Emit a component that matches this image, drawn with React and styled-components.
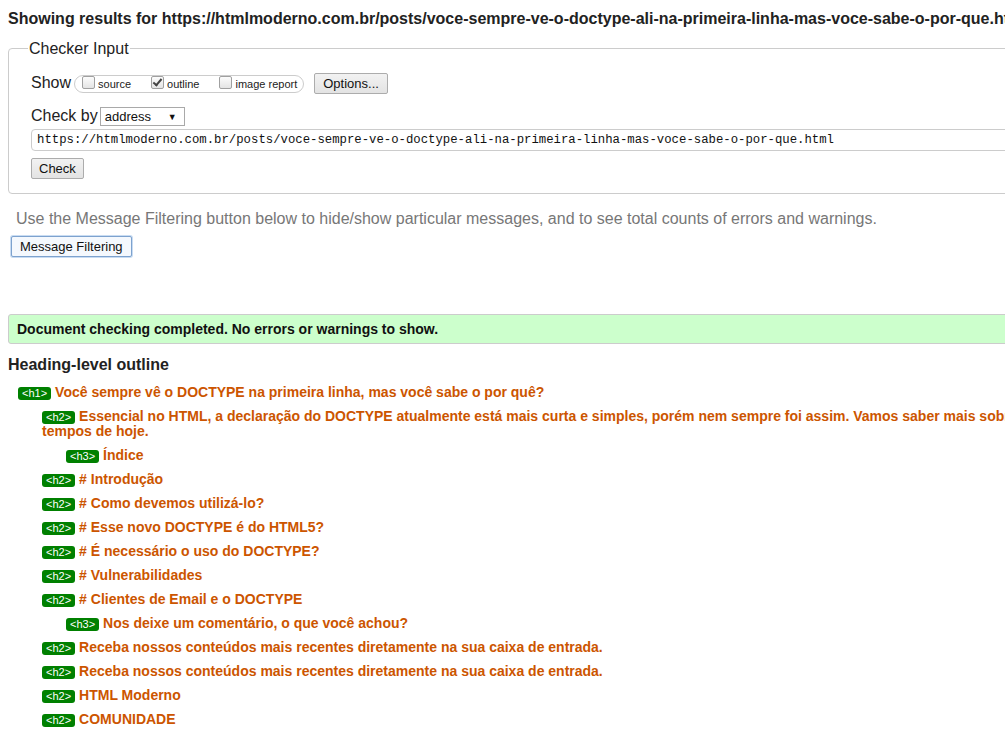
import React from 'react';
import styled, { createGlobalStyle } from 'styled-components';

const GlobalStyle = createGlobalStyle`
  html, body {
    margin: 0;
    padding: 0;
    background: #fff;
    overflow: hidden;
  }
  body {
    font-family: "Liberation Sans", Arial, sans-serif;
    color: #222;
  }
`;

const Page = styled.div`
  width: 1400px;
  padding: 0 8px;
  box-sizing: border-box;
`;

const Title = styled.h2`
  margin: 9px 0 11px;
  font-size: 16px;
  line-height: 20px;
  font-weight: bold;
  white-space: nowrap;
  color: #222;
`;

const Fieldset = styled.fieldset`
  margin: 0;
  padding: 16px 22px 14px;
  border: 1px solid #ccc;
  border-radius: 4px;
`;

const Legend = styled.legend`
  font-size: 16px;
  line-height: 17px;
  padding: 0 1px;
  margin-left: -3px;
  color: #222;
`;

const Row = styled.div`
  display: flex;
  align-items: center;
  gap: ${p => p.$gap || 3}px;
  margin-top: ${p => p.$top || 0}px;
`;

const Label = styled.span`
  font-size: 16px;
  line-height: 18px;
  color: #222;
  margin-top: -2px;
`;

const Pill = styled.div`
  display: flex;
  align-items: center;
  height: 16px;
  padding: 0 6px 0 7px;
  border: 1px solid #ccc;
  border-radius: 9px;
  gap: 20px;
`;

const Option = styled.label`
  display: flex;
  align-items: center;
  gap: 3px;
  font-size: 11px;
  color: #222;
  line-height: 13px;
  padding-top: 1px;
`;

const Box = styled.span`
  position: relative;
  width: 11px;
  height: 11px;
  border: 1px solid #a0a0a0;
  border-radius: 2px;
  background: linear-gradient(#fcfcfc, #e4e4e4);
  margin-top: -4px;
  &::after {
    content: '';
    display: ${p => (p.$checked ? 'block' : 'none')};
    position: absolute;
    left: 3px;
    top: 0px;
    width: 3px;
    height: 7px;
    border: solid #444;
    border-width: 0 2px 2px 0;
    transform: rotate(40deg);
  }
`;

const Button = styled.button`
  font-family: "Liberation Sans", Arial, sans-serif;
  font-size: 13px;
  height: ${p => p.$h || 21}px;
  padding: 0 ${p => p.$px || 7}px;
  color: #111;
  border: 1px solid ${p => (p.$focus ? '#7da2ce' : '#acacac')};
  border-radius: 2px;
  background: ${p => (p.$focus ? '#f4f8fd' : 'linear-gradient(#f2f2f2, #e3e3e3)')};
  box-shadow: ${p => (p.$focus ? '0 0 0 1px #c9dcf2' : 'none')};
  cursor: pointer;
`;

const Select = styled.div`
  display: flex;
  align-items: center;
  justify-content: space-between;
  box-sizing: border-box;
  width: 85px;
  height: 19px;
  padding: 0 7px 0 4px;
  border: 1px solid #a9a9a9;
  font-size: 13px;
  color: #111;
  background: #fff;
  span:last-child {
    font-size: 9px;
  }
`;

const UrlInput = styled.div`
  box-sizing: border-box;
  height: 22px;
  margin-top: 3px;
  padding: 0 5px;
  border: 1px solid #ccc;
  border-radius: 4px;
  font-family: "Liberation Mono", "DejaVu Sans Mono", monospace;
  font-size: 12.3px;
  line-height: 20px;
  color: #111;
  white-space: nowrap;
`;

const Hint = styled.p`
  margin: 15px 0 7px 8px;
  font-size: 16px;
  line-height: 20px;
  color: #777;
`;

const FilterRow = styled.div`
  padding-left: 3px;
  margin-bottom: 57px;
`;

const Success = styled.div`
  padding: 6px 8px;
  border: 1px solid #ccc;
  border-radius: 3px;
  background: #ccffcc;
  font-size: 14px;
  line-height: 16px;
  font-weight: bold;
  color: #111;
`;

const OutlineTitle = styled.h2`
  margin: 11px 0 10px;
  font-size: 16px;
  line-height: 20px;
  font-weight: bold;
  color: #222;
`;

const Outline = styled.ol`
  list-style: none;
  margin: 0;
  padding: 0 0 0 10px;
`;

const Item = styled.li`
  margin: 0 0 9px ${p => (p.$level - 1) * 24}px;
  font-size: 14px;
  line-height: 15px;
  font-weight: bold;
  color: #c50;
`;

const Badge = styled.span`
  display: inline-block;
  padding: 0 4px;
  margin-right: 4px;
  border-radius: 3px;
  background: #008000;
  color: #fff;
  font-size: 11px;
  line-height: 13px;
  font-weight: normal;
`;

const url =
  'https://htmlmoderno.com.br/posts/voce-sempre-ve-o-doctype-ali-na-primeira-linha-mas-voce-sabe-o-por-que.html';

const headings = [
  [1, 'Você sempre vê o DOCTYPE na primeira linha, mas você sabe o por quê?'],
  [2, 'long'],
  [3, 'Índice'],
  [2, '# Introdução'],
  [2, '# Como devemos utilizá-lo?'],
  [2, '# Esse novo DOCTYPE é do HTML5?'],
  [2, '# É necessário o uso do DOCTYPE?'],
  [2, '# Vulnerabilidades'],
  [2, '# Clientes de Email e o DOCTYPE'],
  [3, 'Nos deixe um comentário, o que você achou?'],
  [2, 'Receba nossos conteúdos mais recentes diretamente na sua caixa de entrada.'],
  [2, 'Receba nossos conteúdos mais recentes diretamente na sua caixa de entrada.'],
  [2, 'HTML Moderno'],
  [2, 'COMUNIDADE'],
];

export default function App() {
  return (
    <Page>
      <GlobalStyle />
      <Title>Showing results for {url}</Title>

      <Fieldset>
        <Legend>Checker Input</Legend>
        <Row $gap={3}>
          <Label>Show</Label>
          <Pill>
            <Option><Box />source</Option>
            <Option><Box $checked />outline</Option>
            <Option><Box />image report</Option>
          </Pill>
          <Button $px={8} style={{ marginLeft: 7 }}>Options...</Button>
        </Row>
        <Row $top={13} $gap={2}>
          <Label>Check by</Label>
          <Select>
            <span>address</span>
            <span>▼</span>
          </Select>
        </Row>
        <UrlInput>{url}</UrlInput>
        <Row $top={7}>
          <Button $px={7}>Check</Button>
        </Row>
      </Fieldset>

      <Hint>
        Use the Message Filtering button below to hide/show particular messages, and to see total
        counts of errors and warnings.
      </Hint>
      <FilterRow>
        <Button $focus $h={21} $px={8}>Message Filtering</Button>
      </FilterRow>

      <Success>Document checking completed. No errors or warnings to show.</Success>

      <OutlineTitle>Heading-level outline</OutlineTitle>
      <Outline>
        {headings.map(([level, text], i) => (
          <Item key={i} $level={level}>
            <Badge>&lt;h{level}&gt;</Badge>
            {text === 'long' ? (
              <>
                Essencial no HTML, a declaração do DOCTYPE atualmente está mais curta e simples,
                porém nem sempre foi assim. Vamos saber mais sobre ele nos
                <br />
                tempos de hoje.
              </>
            ) : (
              text
            )}
          </Item>
        ))}
      </Outline>
    </Page>
  );
}
